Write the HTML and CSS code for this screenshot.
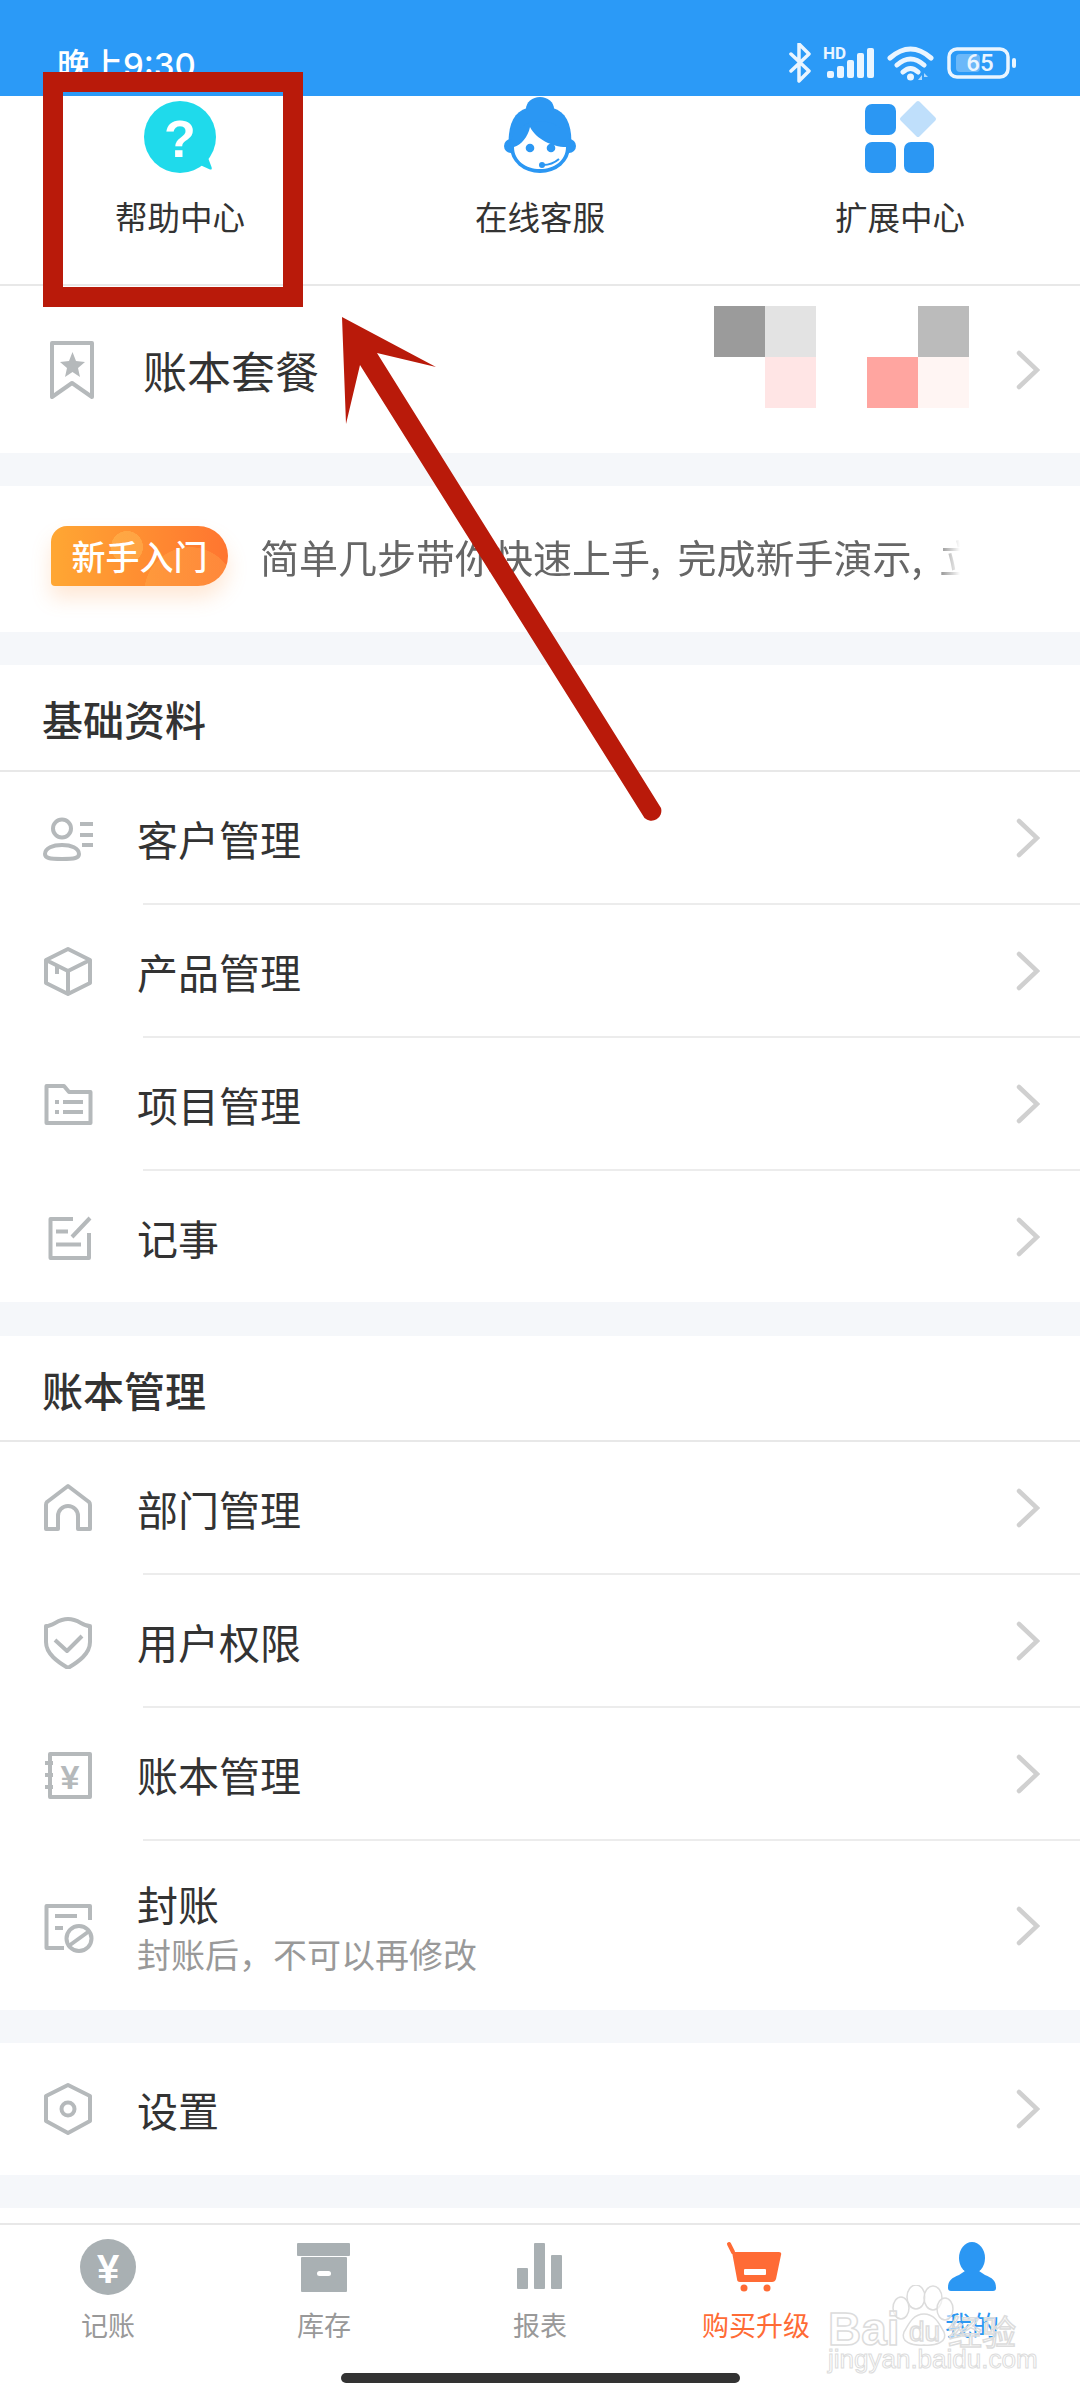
FILE: index.html
```html
<!DOCTYPE html>
<html lang="zh-CN">
<head>
    <meta charset="UTF-8">
    <meta name="viewport" content="width=device-width, initial-scale=1.0">
    <title>我的</title>
    <link rel="stylesheet" href="styles.css">
</head>
<body>
<div class="page">

    <div class="status-bar">
        <span class="status-time">晚上9:30</span>
        <svg class="status-icons" width="229" height="40" viewBox="0 0 229 40">
            <path class="st-line" d="M3 11 L21 28 L11 38 V1 L21 11 L3 28"/>
            <text class="st-hd" x="35" y="16">HD</text>
            <rect class="st-fill" x="39" y="28" width="7" height="7" rx="2"/>
            <rect class="st-fill" x="49" y="23" width="7" height="12" rx="2"/>
            <rect class="st-fill" x="59" y="17" width="7" height="18" rx="2"/>
            <rect class="st-fill" x="69" y="10" width="7" height="25" rx="2"/>
            <rect class="st-fill" x="79" y="5" width="7" height="30" rx="2"/>
            <path class="st-wifi" d="M102 15 Q122.5 -3 143 15 M109 22 Q122.5 10 136 22 M115 29 Q122.5 22 130 29"/>
            <circle class="st-fill" cx="122.5" cy="34" r="3.5"/>
            <path class="st-fill" d="M134 32 V37 H130 Z M136 30 L140 34 H136 Z" opacity="0.7"/>
            <rect class="st-batt" x="161" y="6" width="59" height="28" rx="8"/>
            <rect class="st-level" x="168" y="11" width="24" height="18" rx="4"/>
            <text class="st-num" x="192" y="28">65</text>
            <rect class="st-fill" x="224" y="15" width="4" height="10" rx="2"/>
        </svg>
    </div>

    <div class="quick-row">
        <div class="quick-item">
            <svg class="quick-icon" width="80" height="80" viewBox="0 0 80 80">
                <circle cx="40" cy="40" r="36" fill="#1fdaeb"/>
                <path d="M60 68 L70 72.5 Q72.5 73 71.5 70 L67 58 Z" fill="#1fdaeb"/>
                <text class="help-mark" x="40" y="60">?</text>
            </svg>
            <span class="quick-label">帮助中心</span>
        </div>
        <div class="quick-item">
            <svg class="quick-icon" width="80" height="80" viewBox="0 0 80 80">
                <ellipse cx="40" cy="12" rx="14" ry="12" fill="#2b97f3"/>
                <path d="M9 52 C7 30 13 15 27 11 H53 C67 15 73 30 71 52 Z" fill="#2b97f3"/>
                <circle cx="11" cy="49" r="7" fill="#2b97f3"/>
                <circle cx="69" cy="49" r="7" fill="#2b97f3"/>
                <ellipse cx="40" cy="50" rx="30" ry="26" fill="#2b97f3"/>
                <path d="M14 50 C21 48 28 40 30 30 C36 42 52 50 66 50 C66 64 54 72 40 72 C26 72 14 64 14 50 Z" fill="#fff"/>
                <circle cx="30" cy="51" r="4.3" fill="#2b97f3"/>
                <circle cx="51" cy="51" r="4.3" fill="#2b97f3"/>
                <path d="M43 68 Q52 68 59 62" fill="none" stroke="#2b97f3" stroke-width="2"/>
                <circle cx="42" cy="68" r="3" fill="#2b97f3"/>
            </svg>
            <span class="quick-label">在线客服</span>
        </div>
        <div class="quick-item">
            <svg class="quick-icon" width="80" height="80" viewBox="0 0 80 80">
                <rect x="5" y="7" width="31" height="31" rx="7" fill="#2b97f3"/>
                <rect x="5" y="45" width="31" height="31" rx="7" fill="#2b97f3"/>
                <rect x="44" y="45" width="30" height="31" rx="7" fill="#2b97f3"/>
                <path d="M58 6 L74 22 L58 38 L42 22 Z" fill="#bfdffb" stroke="#bfdffb" stroke-width="4" stroke-linejoin="round"/>
            </svg>
            <span class="quick-label">扩展中心</span>
        </div>
    </div>

    <div class="row plan-row">
        <svg class="plan-icon" width="56" height="64" viewBox="0 0 56 64">
            <path class="line-icon" d="M8 5 H48 V59 L28 45 L8 59 Z"/>
            <path d="M28.5 14 L32 23 L41 24 L34 30 L36 39 L28.5 34 L21 39 L23 30 L16 24 L25 23 Z" fill="#b5b9bb"/>
        </svg>
        <span class="plan-title">账本套餐</span>
        <div class="mosaic">
            <i class="tile tile-dark"></i><i class="tile tile-light"></i><i class="tile"></i><i class="tile"></i><i class="tile tile-mid"></i>
            <i class="tile"></i><i class="tile tile-blush"></i><i class="tile"></i><i class="tile tile-rose"></i><i class="tile tile-pale"></i>
        </div>
        <svg class="chevron" width="24" height="40" viewBox="0 0 24 40"><path d="M3 3 L21 20 L3 37"/></svg>
    </div>

    <div class="block promo-row">
        <span class="promo-badge">新手入门</span>
        <div class="promo-text">简单几步带你快速上手, 完成新手演示, 立即体验</div>
    </div>

    <div class="block">
        <div class="section-title">基础资料</div>
        <div class="row">
            <svg class="row-icon" width="56" height="56" viewBox="0 0 56 56">
                <circle class="line-icon" cx="22" cy="18.5" r="9"/>
                <path class="line-icon" d="M5 44 C5 38 13 35 22 35 C31 35 39 38 39 44 C39 48 35 49 22 49 C9 49 5 48 5 44 Z"/>
                <path class="line-icon" d="M40 14 H53 M40 25 H53 M42 35 H53"/>
            </svg>
            <span class="row-title">客户管理</span>
            <svg class="chevron" width="24" height="40" viewBox="0 0 24 40"><path d="M3 3 L21 20 L3 37"/></svg>
        </div>
        <div class="divider"></div>
        <div class="row">
            <svg class="row-icon" width="56" height="56" viewBox="0 0 56 56">
                <path class="line-icon" d="M28 6 L50 17 V40 L28 51 L6 40 V17 Z M6 17 L28 28 L50 17 M28 28 V51 M17 22 V31"/>
            </svg>
            <span class="row-title">产品管理</span>
            <svg class="chevron" width="24" height="40" viewBox="0 0 24 40"><path d="M3 3 L21 20 L3 37"/></svg>
        </div>
        <div class="divider"></div>
        <div class="row">
            <svg class="row-icon" width="56" height="56" viewBox="0 0 56 56">
                <path class="line-icon" d="M6.5 10 H24 L29 16 H50.5 V47 H6.5 Z M23 26 H43 M23 36 H43 M15 26 H19 M15 36 H19"/>
            </svg>
            <span class="row-title">项目管理</span>
            <svg class="chevron" width="24" height="40" viewBox="0 0 24 40"><path d="M3 3 L21 20 L3 37"/></svg>
        </div>
        <div class="divider"></div>
        <div class="row">
            <svg class="row-icon" width="56" height="56" viewBox="0 0 56 56">
                <path class="line-icon" d="M33 10 H10.5 V49 H49 V24 M50 9 L32 28 M16 22.5 H28 M16 35.5 H41"/>
            </svg>
            <span class="row-title">记事</span>
            <svg class="chevron" width="24" height="40" viewBox="0 0 24 40"><path d="M3 3 L21 20 L3 37"/></svg>
        </div>
    </div>

    <div class="block block-ledger">
        <div class="section-title section-title-short">账本管理</div>
        <div class="row">
            <svg class="row-icon" width="56" height="56" viewBox="0 0 56 56">
                <path class="line-icon" d="M7 22 L28 6 L49 22 Q50 23 50 25 V49 H38 V36 A10 10 0 0 0 18 36 V49 H6 V25 Q6 23 7 22 Z"/>
            </svg>
            <span class="row-title">部门管理</span>
            <svg class="chevron" width="24" height="40" viewBox="0 0 24 40"><path d="M3 3 L21 20 L3 37"/></svg>
        </div>
        <div class="divider"></div>
        <div class="row">
            <svg class="row-icon" width="56" height="56" viewBox="0 0 56 56">
                <path class="line-icon" d="M6 13 C14 13 17 6 28 6 C39 6 42 13 50 13 V29 C50 41 38 49 28 55 C18 49 6 41 6 29 Z M15 27 L27 38 L42 23"/>
            </svg>
            <span class="row-title">用户权限</span>
            <svg class="chevron" width="24" height="40" viewBox="0 0 24 40"><path d="M3 3 L21 20 L3 37"/></svg>
        </div>
        <div class="divider"></div>
        <div class="row">
            <svg class="row-icon" width="56" height="56" viewBox="0 0 56 56">
                <path class="line-icon" d="M10 8 H50 V51 H10 Z M5 17 H13 M5 29 H13 M5 41 H13"/>
                <text class="icon-yen" x="30" y="43">¥</text>
            </svg>
            <span class="row-title">账本管理</span>
            <svg class="chevron" width="24" height="40" viewBox="0 0 24 40"><path d="M3 3 L21 20 L3 37"/></svg>
        </div>
        <div class="divider"></div>
        <div class="row close-row">
            <svg class="row-icon" width="56" height="56" viewBox="0 0 56 56">
                <path class="line-icon" d="M50 22 V8 H6.5 V50 H24 M15 18 H37 M15 30 H23"/>
                <circle class="line-icon" cx="39" cy="40.5" r="12.5"/>
                <path class="line-icon" d="M30 47 L48 34"/>
            </svg>
            <div class="close-text">
                <div class="row-title">封账</div>
                <div class="row-sub">封账后&#xFF0C;不可以再修改</div>
            </div>
            <svg class="chevron" width="24" height="40" viewBox="0 0 24 40"><path d="M3 3 L21 20 L3 37"/></svg>
        </div>
    </div>

    <div class="block">
        <div class="row settings-row">
            <svg class="row-icon" width="56" height="56" viewBox="0 0 56 56">
                <path class="line-icon" d="M28 4 L50 15 V40 L28 52 L6 40 V15 Z"/>
                <circle class="line-icon" cx="28" cy="28" r="6.5"/>
            </svg>
            <span class="row-title">设置</span>
            <svg class="chevron" width="24" height="40" viewBox="0 0 24 40"><path d="M3 3 L21 20 L3 37"/></svg>
        </div>
    </div>

    <div class="block tab-bar">
        <div class="tabs">
            <div class="tab">
                <svg width="64" height="60" viewBox="0 0 64 60">
                    <circle cx="32" cy="29" r="28" fill="#a9b0b3"/>
                    <text class="tab-yen" x="32" y="45">¥</text>
                </svg>
                <span class="tab-label">记账</span>
            </div>
            <div class="tab">
                <svg width="64" height="60" viewBox="0 0 64 60">
                    <rect x="5" y="5" width="53" height="13" rx="1" fill="#a9b0b3"/>
                    <rect x="9" y="19" width="46" height="35" rx="1" fill="#a9b0b3"/>
                    <rect x="25" y="33" width="14" height="5" rx="2.5" fill="#fff"/>
                </svg>
                <span class="tab-label">库存</span>
            </div>
            <div class="tab">
                <svg width="64" height="60" viewBox="0 0 64 60">
                    <rect x="9" y="30" width="11" height="21" rx="1" fill="#a9b0b3"/>
                    <rect x="26" y="5" width="11" height="46" rx="1" fill="#a9b0b3"/>
                    <rect x="43" y="17" width="11" height="34" rx="1" fill="#a9b0b3"/>
                </svg>
                <span class="tab-label">报表</span>
            </div>
            <div class="tab">
                <svg width="64" height="60" viewBox="0 0 64 60">
                    <path d="M5 6 L9 14" stroke="#ff6b35" stroke-width="4" stroke-linecap="round"/>
                    <path d="M8 14 H55 Q58 14 57 17 L52 41 Q51 44 48 44 H16 Q13 44 13 41 Z" fill="#ff6b35"/>
                    <circle cx="20" cy="50" r="3.5" fill="#ff6b35"/>
                    <circle cx="43" cy="50" r="3.5" fill="#ff6b35"/>
                    <rect x="20" y="31" width="22" height="6" rx="1" fill="#fff"/>
                </svg>
                <span class="tab-label tab-label-buy">购买升级</span>
            </div>
            <div class="tab">
                <svg width="64" height="60" viewBox="0 0 64 60">
                    <ellipse cx="32" cy="20" rx="13" ry="16" fill="#2b97f3"/>
                    <path d="M8 50 C8 42 12 40 19 37 L25 33 H39 L45 37 C52 40 56 42 56 50 A3 3 0 0 1 53 53 H11 A3 3 0 0 1 8 50 Z" fill="#2b97f3"/>
                </svg>
                <span class="tab-label tab-label-me">我的</span>
            </div>
        </div>
        <div class="home-bar"></div>
    </div>

    <!-- red annotation drawn over the screenshot -->
    <svg class="annotation" width="1080" height="2400" viewBox="0 0 1080 2400">
        <path fill-rule="evenodd" d="M43 72 H303 V307 H43 Z M63 92 V287 H283 V92 Z"/>
        <path d="M342 317 L436 367 L377 353 L661 808 A10 10 0 0 1 644.5 818 L360 365 L346 424 Z"/>
    </svg>

    <!-- baidu watermark -->
    <svg class="watermark" width="240" height="100" viewBox="820 2285 240 100">
        <ellipse cx="916" cy="2297" rx="9" ry="12"/>
        <ellipse cx="933" cy="2298" rx="9" ry="12"/>
        <ellipse cx="901" cy="2308" rx="8" ry="11"/>
        <ellipse cx="945" cy="2309" rx="8" ry="11"/>
        <path d="M924 2314 C912 2314 908 2326 904 2332 C900 2342 912 2346 924 2345 C936 2346 948 2342 944 2332 C940 2326 936 2314 924 2314 Z"/>
        <text class="wm-big" x="828" y="2345">Bai</text>
        <text class="wm-du" x="909" y="2341">du</text>
        <text class="wm-cn" x="948" y="2345">经验</text>
        <text class="wm-url" x="828" y="2368">jingyan.baidu.com</text>
    </svg>
</div>
</body>
</html>
```

FILE: styles.css
```css
/* Page */
body {
    margin: 0;
    background-color: #f5f7fa;
    font-family: 'Noto Sans CJK SC', sans-serif;
    color: #333;
}
.page {
    position: relative;
    width: 1080px;
    height: 2400px;
    overflow: hidden;
}
.block {
    margin-top: 33px;
    background-color: #fff;
}
.block-ledger {
    margin-top: 34px;
}

/* Status bar */
.status-bar {
    display: flex;
    justify-content: space-between;
    align-items: center;
    box-sizing: border-box;
    height: 96px;
    padding: 30px 63px 0 57px;
    background-color: #2b9af7;
    color: #fff;
}
.status-time {
    font-family: 'Inter', 'Noto Sans CJK SC', sans-serif;
    font-size: 33px;
    font-weight: 500;
}
.st-line, .st-wifi {
    fill: none;
    stroke: #eaf5ff;
    stroke-width: 3.5;
    stroke-linecap: round;
    stroke-linejoin: round;
}
.st-wifi {
    stroke-width: 5;
}
.st-fill {
    fill: #eaf5ff;
}
.st-hd {
    fill: #eaf5ff;
    font-family: 'Roboto', sans-serif;
    font-size: 17px;
    font-weight: 700;
}
.st-batt {
    fill: none;
    stroke: #eaf5ff;
    stroke-width: 3.5;
}
.st-level {
    fill: #fff;
    opacity: 0.3;
}
.st-num {
    fill: #eaf5ff;
    font-family: 'Roboto', sans-serif;
    font-size: 24px;
    font-weight: 500;
    text-anchor: middle;
}

/* Quick links */
.quick-row {
    display: grid;
    grid-template-columns: repeat(3, 1fr);
    box-sizing: border-box;
    height: 190px;
    background-color: #fff;
    border-bottom: 2px solid #e8e8e8;
}
.quick-item {
    display: flex;
    flex-direction: column;
    align-items: center;
}
.quick-icon {
    margin-top: 1px;
}
.quick-label {
    margin-top: 16px;
    font-size: 32.5px;
    line-height: 46px;
}
.help-mark {
    fill: #fff;
    font-family: 'Liberation Sans', sans-serif;
    font-size: 52px;
    font-weight: 700;
    text-anchor: middle;
}

/* List rows */
.row {
    display: flex;
    align-items: center;
    height: 131px;
    padding-right: 40px;
    background-color: #fff;
}
.row-icon {
    flex: none;
    margin: 0 41px 0 40px;
}
.row-title {
    font-size: 41px;
    line-height: 50px;
}
.row .chevron {
    margin-left: auto;
}
.chevron path {
    fill: none;
    stroke: #d0d0d0;
    stroke-width: 4.5;
    stroke-linecap: round;
}
.line-icon {
    fill: none;
    stroke: #b5b9bb;
    stroke-width: 4;
    stroke-linejoin: round;
}
.icon-yen {
    fill: #b5b9bb;
    font-family: 'Liberation Sans', sans-serif;
    font-size: 34px;
    font-weight: 700;
    text-anchor: middle;
}
.divider {
    height: 2px;
    margin-left: 143px;
    background-color: #ececec;
}
.section-title {
    box-sizing: border-box;
    height: 107px;
    padding-left: 42px;
    border-bottom: 2px solid #e8e8e8;
    font-size: 41px;
    font-weight: 500;
    line-height: 106px;
}
.section-title-short {
    height: 106px;
}

/* Plan row */
.plan-row {
    height: 167px;
}
.plan-icon {
    flex: none;
    margin: 0 43px 0 44px;
}
.plan-title {
    font-size: 44px;
}
.mosaic {
    display: grid;
    grid-template-columns: repeat(5, 51px);
    grid-auto-rows: 51px;
    margin: 0 47px 25px auto;
}
.plan-row .chevron {
    margin-left: 0;
}
.tile-dark { background-color: #9b9b9b; }
.tile-light { background-color: #e3e3e3; }
.tile-mid { background-color: #bbbbbb; }
.tile-blush { background-color: #ffe5e5; }
.tile-rose { background-color: #ffa5a0; }
.tile-pale { background-color: #fff5f3; }

/* Promo row */
.promo-row {
    display: flex;
    align-items: center;
    box-sizing: border-box;
    height: 146px;
    padding: 0 120px 6px 51px;
}
.promo-badge {
    flex: none;
    width: 177px;
    height: 60px;
    border-radius: 16px 30px 30px 4px;
    background:
        radial-gradient(circle 16px at 76px 21px, rgba(255, 205, 100, 0.35) 99%, transparent),
        radial-gradient(circle 46px at 139px 67px, rgba(255, 190, 90, 0.25) 99%, transparent),
        linear-gradient(90deg, #ffa733, #ff7530);
    box-shadow: 0 12px 20px rgba(255, 150, 70, 0.22);
    color: #fff;
    font-size: 34px;
    font-weight: 500;
    line-height: 60px;
    text-align: center;
}
.promo-text {
    flex: 1;
    margin-left: 32px;
    overflow: hidden;
    color: #666;
    font-size: 39px;
    word-spacing: 8px;
    white-space: nowrap;
    -webkit-mask-image: linear-gradient(90deg, #000 96%, transparent);
    mask-image: linear-gradient(90deg, #000 96%, transparent);
}

/* Two line row */
.close-row {
    height: 169px;
}
.close-text {
    padding-top: 6px;
}
.row-sub {
    margin-top: 1px;
    color: #999;
    font-size: 34px;
    line-height: 50px;
}
.settings-row {
    height: 132px;
}

/* Tab bar */
.tab-bar {
    box-sizing: border-box;
    height: 192px;
    padding-top: 15px;
}
.tabs {
    display: grid;
    grid-template-columns: repeat(5, 1fr);
    box-sizing: border-box;
    height: 150px;
    padding-top: 13px;
    border-top: 2px solid #e8e8e8;
}
.tab {
    display: flex;
    flex-direction: column;
    align-items: center;
}
.tab-label {
    margin-top: 9px;
    color: #999;
    font-size: 27px;
    line-height: 36px;
}
.tab-label-buy {
    color: #ff6b35;
}
.tab-label-me {
    color: #2b97f3;
}
.tab-yen {
    fill: #fff;
    font-family: 'Liberation Sans', sans-serif;
    font-size: 40px;
    font-weight: 700;
    text-anchor: middle;
}
.home-bar {
    width: 399px;
    height: 10px;
    margin: 0 auto;
    border-radius: 5px;
    background-color: #333;
}

/* Overlays */
.annotation {
    position: absolute;
    top: 0;
    left: 0;
    fill: #b91a0a;
}
.watermark {
    position: absolute;
    top: 2285px;
    left: 820px;
    fill: rgba(255, 255, 255, 0.55);
    stroke: #dcdcdc;
    stroke-width: 1.5;
}
.wm-big {
    font-family: 'Liberation Sans', sans-serif;
    font-size: 46px;
    font-weight: 700;
}
.wm-du {
    font-family: 'Liberation Sans', sans-serif;
    font-size: 28px;
}
.wm-cn {
    font-size: 34px;
}
.wm-url {
    font-family: 'Liberation Sans', sans-serif;
    font-size: 26px;
    stroke-width: 1;
}
```
